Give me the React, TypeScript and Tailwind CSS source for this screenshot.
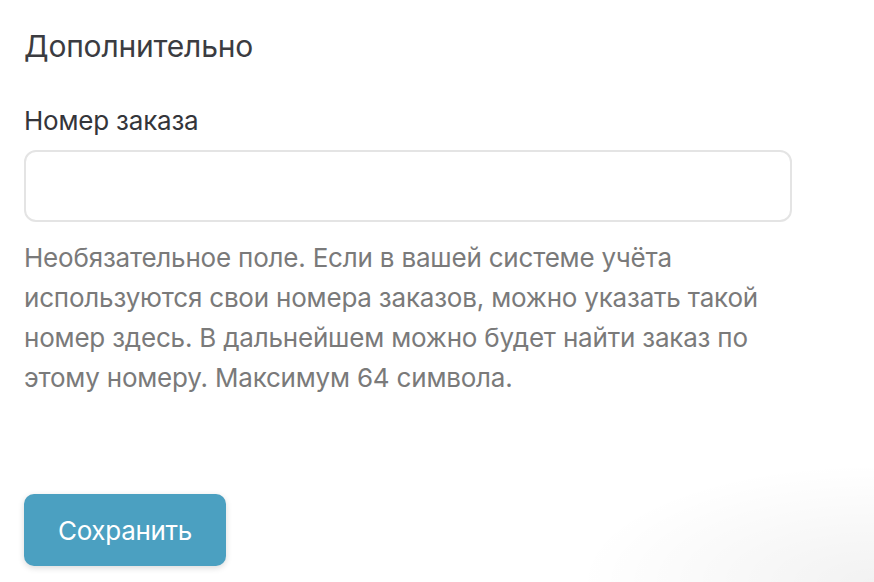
export default function App() {
  return (
    <div
      className="relative min-h-[582px] w-full overflow-hidden bg-white px-6 pt-[26px]"
      style={{ fontFamily: 'Inter, "Noto Sans", sans-serif' }}
    >
      <h2 className="text-[30px] leading-[40px] tracking-[-0.2px] text-[#3b3c41]">Дополнительно</h2>

      <label className="mt-[39px] block text-[26px] leading-[32px] tracking-[-0.2px] text-[#34353a]">Номер заказа</label>
      <input
        type="text"
        className="mt-[13px] block h-[72px] w-[768px] rounded-[12px] border-2 border-[#e4e4e4] bg-white px-4 text-[24px] outline-none"
      />

      <p className="mt-[16px] w-[800px] text-[26px] leading-[40px] tracking-[-0.2px] text-[#7a7a7a]">
        Необязательное поле. Если в вашей системе учёта
        <br />
        используются свои номера заказов, можно указать такой
        <br />
        номер здесь. В дальнейшем можно будет найти заказ по
        <br />
        этому номеру. Максимум 64 символа.
      </p>

      <button className="mt-[96px] h-[72px] w-[202px] rounded-[10px] bg-[#4ba0c1] text-[26px] tracking-[-0.3px] text-white shadow-[0_2px_6px_rgba(0,0,0,0.15)]">
        Сохранить
      </button>

      <div className="pointer-events-none absolute bottom-0 right-0 h-[120px] w-[300px] bg-[radial-gradient(ellipse_at_bottom_right,rgba(0,0,0,0.05),transparent_70%)]" />
    </div>
  );
}
